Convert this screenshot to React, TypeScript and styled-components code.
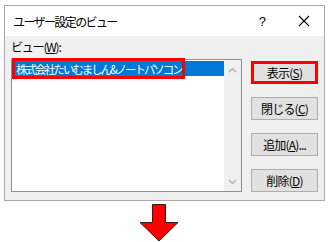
import { ReactElement } from 'react'
import styled, { createGlobalStyle } from 'styled-components'

const GlobalStyle = createGlobalStyle`
  html, body {
    margin: 0;
    padding: 0;
    background: #ffffff;
  }
  body {
    font-family: "Noto Sans CJK JP", "Noto Sans", sans-serif;
    font-size: 12px;
    color: #000;
  }
`

const buttons = [
  { label: '表示', key: 'S', suffix: '', active: true },
  { label: '閉じる', key: 'C', suffix: '', active: false },
  { label: '追加', key: 'A', suffix: '...', active: false },
  { label: '削除', key: 'D', suffix: '', active: false },
]

function App(): ReactElement {
  return (
    <>
      <GlobalStyle />
      <Page>
        <Dialog>
          <TitleBar>
            <Title>ユーザー設定のビュー</Title>
            <TitleControls>
              <HelpMark>?</HelpMark>
              <CloseMark>
                <svg width="12" height="12" viewBox="0 0 12 12">
                  <path d="M1 1 L11 11 M11 1 L1 11" stroke="#000" strokeWidth="1.1" fill="none" />
                </svg>
              </CloseMark>
            </TitleControls>
          </TitleBar>

          <Body>
            <FieldLabel>
              ビュー(<u>W</u>):
            </FieldLabel>
            <Content>
              <ListBox>
                <Items>
                  <SelectedItem>
                    <Highlight>株式会社たいむましん&amp;ノートパソコン</Highlight>
                  </SelectedItem>
                </Items>
                <ScrollBar>
                  <ScrollArrow>
                    <svg width="9" height="6" viewBox="0 0 9 6">
                      <path d="M1 5 L4.5 1.5 L8 5" stroke="#a8a8a8" strokeWidth="1.2" fill="none" />
                    </svg>
                  </ScrollArrow>
                  <ScrollArrow>
                    <svg width="9" height="6" viewBox="0 0 9 6">
                      <path d="M1 1 L4.5 4.5 L8 1" stroke="#a8a8a8" strokeWidth="1.2" fill="none" />
                    </svg>
                  </ScrollArrow>
                </ScrollBar>
              </ListBox>

              <ButtonColumn>
                {buttons.map((b) => (
                  <DialogButton key={b.key} $active={b.active}>
                    {b.label}(<u>{b.key}</u>){b.suffix}
                  </DialogButton>
                ))}
              </ButtonColumn>
            </Content>
          </Body>
        </Dialog>

        <ArrowWrap>
          <svg width="40" height="38" viewBox="0 0 40 38">
            <polygon
              points="13.5,0.5 26.5,0.5 26.5,18.5 39,18.5 20,37 1,18.5 13.5,18.5"
              fill="#ff0000"
              stroke="#3a1a1a"
              strokeWidth="1"
            />
          </svg>
        </ArrowWrap>
      </Page>
    </>
  )
}

export default App

const Page = styled.div`
  width: 329px;
  height: 242px;
  padding: 5px 4px 0 4px;
  box-sizing: border-box;
  display: flex;
  flex-direction: column;
  align-items: center;
  overflow: hidden;
`

const Dialog = styled.div`
  width: 321px;
  height: 197px;
  box-sizing: border-box;
  border: 1px solid #a9a9a9;
  background: #f0f0f0;
  display: flex;
  flex-direction: column;
  align-self: flex-start;
`

const TitleBar = styled.div`
  height: 30px;
  background: #ffffff;
  display: flex;
  align-items: center;
  justify-content: space-between;
  padding: 0 14px 0 8px;
`

const Title = styled.span`
  font-size: 12px;
  letter-spacing: -1.6px;
`

const TitleControls = styled.div`
  display: flex;
  align-items: center;
  gap: 32px;
`

const HelpMark = styled.span`
  font-family: "Liberation Sans", sans-serif;
  font-size: 13px;
`

const CloseMark = styled.span`
  display: flex;
`

const Body = styled.div`
  flex: 1;
  display: flex;
  flex-direction: column;
  padding: 3px 6px 0 6px;
`

const FieldLabel = styled.div`
  font-size: 12px;
  line-height: 16px;
  height: 17px;
  letter-spacing: -1.2px;
`

const Content = styled.div`
  display: flex;
  align-items: flex-start;
  gap: 9px;
  margin-top: 3px;
`

const ListBox = styled.div`
  width: 231px;
  height: 133px;
  box-sizing: border-box;
  border: 1px solid #8c9096;
  background: #ffffff;
  display: flex;
`

const Items = styled.div`
  flex: 1;
  padding: 1px 0 0 1px;
`

const SelectedItem = styled.div`
  height: 15px;
  background: #0078d7;
  display: flex;
  align-items: center;
  position: relative;
`

const Highlight = styled.span`
  color: #ffffff;
  font-size: 11.5px;
  letter-spacing: -2.1px;
  white-space: nowrap;
  padding-left: 3px;
  &::after {
    content: '';
    position: absolute;
    left: -1px;
    top: -3px;
    width: 173px;
    height: 21px;
    border: 3px solid #ff0000;
    box-sizing: border-box;
  }
`

const ScrollBar = styled.div`
  width: 17px;
  background: #f0f0f0;
  display: flex;
  flex-direction: column;
  justify-content: space-between;
  align-items: center;
  padding: 7px 0 6px;
  box-sizing: border-box;
`

const ScrollArrow = styled.div`
  display: flex;
`

const ButtonColumn = styled.div`
  display: flex;
  flex-direction: column;
  gap: 13px;
  margin-top: 2px;
`

const DialogButton = styled.div<{ $active: boolean }>`
  width: 67px;
  height: 23px;
  box-sizing: border-box;
  border: ${(p) => (p.$active ? '3px solid #ff0000' : '1px solid #adadad')};
  background: #e1e1e1;
  display: flex;
  align-items: center;
  justify-content: center;
  font-size: 12px;
  letter-spacing: -0.8px;
  white-space: nowrap;
`

const ArrowWrap = styled.div`
  margin-top: 3px;
  margin-left: -12px;
  display: flex;
`
